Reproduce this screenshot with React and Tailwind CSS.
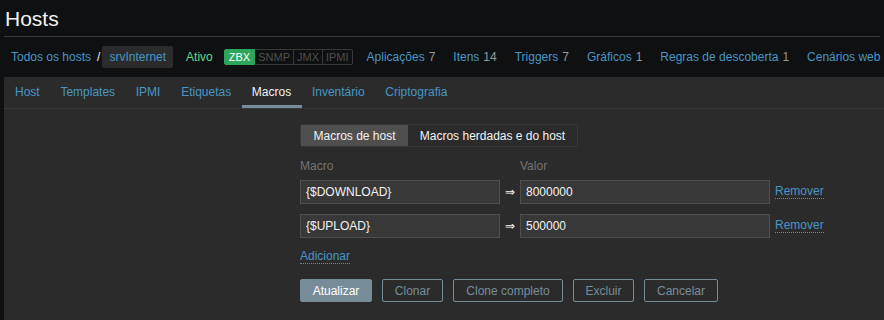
import React from 'react';

const font = "font-['Liberation_Sans',Arial,sans-serif]";

const navLinks = [
  ['Aplicações', '7'],
  ['Itens', '14'],
  ['Triggers', '7'],
  ['Gráficos', '1'],
  ['Regras de descoberta', '1'],
  ['Cenários web', ''],
];

const tabs = ['Host', 'Templates', 'IPMI', 'Etiquetas', 'Macros', 'Inventário', 'Criptografia'];

const macros = [
  ['{$DOWNLOAD}', '8000000'],
  ['{$UPLOAD}', '500000'],
];

const App = () => {
  return (
    <div className={`min-h-[320px] overflow-hidden bg-[#0e1012] text-[12px] text-[#f2f2f2] ${font}`}>
      {/* Title */}
      <div className="mx-[4px] h-[37px] border-b border-[#383838]">
        <h1 className="pt-[7px] pl-[1px] text-[21px] leading-[24px] text-[#f2f2f2]">Hosts</h1>
      </div>

      {/* Breadcrumbs + host nav */}
      <div className="flex h-[40px] items-center whitespace-nowrap pl-[11px]">
        <a className="text-[#4796c4]">Todos os hosts</a>
        <span className="ml-[6px] mr-[2px] text-[#f2f2f2]">/</span>
        <span className="flex h-[22px] items-center rounded-[2px] bg-[#2b2b2b] px-[7px] text-[#4796c4]">srvInternet</span>
        <span className="ml-[13px] text-[#59db8f]">Ativo</span>
        <div className="ml-[11px] flex h-[16px] items-stretch text-[11px] leading-[14px]">
          <span className="rounded-l-[2px] border border-[#2ea55c] bg-[#2ea55c] px-[4px] text-white">ZBX</span>
          <span className="border border-l-0 border-[#383838] px-[3px] text-[#4f4f4f]">SNMP</span>
          <span className="border border-l-0 border-[#383838] px-[3px] text-[#4f4f4f]">JMX</span>
          <span className="rounded-r-[2px] border border-l-0 border-[#383838] px-[3px] text-[#4f4f4f]">IPMI</span>
        </div>
        <div className="ml-[14px] flex gap-[18px]">
          {navLinks.map(([name, count]) => (
            <a key={name} className="text-[#4796c4]">
              {name}
              {count && <span className="ml-[4px] text-[#999999]">{count}</span>}
            </a>
          ))}
        </div>
      </div>

      {/* Tabs + form */}
      <div className="ml-[4px] bg-[#2b2b2b] pb-[20px]">
        <div className="flex h-[32px] border-b border-[#383838] pl-[1px]">
          {tabs.map((t) => (
            <div
              key={t}
              className={`flex items-center pl-[10px] pr-[10.7px] pt-[1px] ${
                t === 'Macros' ? 'border-b-[3px] border-[#768d99] text-[#f2f2f2]' : 'border-b-[3px] border-transparent text-[#4796c4]'
              }`}
            >
              {t}
            </div>
          ))}
        </div>

        <div className="pl-[296px] pt-[15px]">
          {/* Toggle */}
          <div className="flex h-[23px] w-[278px] rounded-[2px] border border-[#383838]">
            <div className="flex w-[107px] items-center justify-center bg-[#4f4f4f] text-[#f2f2f2]">Macros de host</div>
            <div className="flex flex-1 items-center justify-center bg-[#2b2b2b] text-[#f2f2f2]">Macros herdadas e do host</div>
          </div>

          {/* Header labels */}
          <div className="mt-[12px] flex h-[14px] items-center text-[#737373]">
            <span className="w-[220px]">Macro</span>
            <span>Valor</span>
          </div>

          {/* Rows */}
          <div className="mt-[7px] flex flex-col gap-[10px]">
            {macros.map(([m, v]) => (
              <div key={m} className="flex h-[24px] items-center">
                <div className="flex h-[24px] w-[200px] items-center border border-[#4f4f4f] bg-[#383838] px-[5px] text-[#f2f2f2]">{m}</div>
                <span className="w-[20px] text-center text-[#f2f2f2]">⇒</span>
                <div className="flex h-[24px] w-[250px] items-center border border-[#4f4f4f] bg-[#383838] px-[5px] text-[#f2f2f2]">{v}</div>
                <a className="ml-[5px] border-b border-dotted border-[#4796c4] leading-[13px] text-[#4796c4]">Remover</a>
              </div>
            ))}
          </div>

          <div className="mt-[9px]">
            <a className="inline-block border-b border-dotted border-[#4796c4] leading-[13px] text-[#4796c4]">Adicionar</a>
          </div>

          {/* Buttons */}
          <div className="mt-[14px] flex gap-[10px]">
            <button className="h-[23px] w-[72px] rounded-[2px] border border-[#768d99] bg-[#768d99] text-white">Atualizar</button>
            <button className="h-[23px] w-[61px] rounded-[2px] border border-[#768d99] text-[#768d99]">Clonar</button>
            <button className="h-[23px] w-[110px] rounded-[2px] border border-[#768d99] text-[#768d99]">Clone completo</button>
            <button className="h-[23px] w-[61px] rounded-[2px] border border-[#768d99] text-[#768d99]">Excluir</button>
            <button className="h-[23px] w-[74px] rounded-[2px] border border-[#768d99] text-[#768d99]">Cancelar</button>
          </div>
        </div>
      </div>
    </div>
  );
};

export default App;
